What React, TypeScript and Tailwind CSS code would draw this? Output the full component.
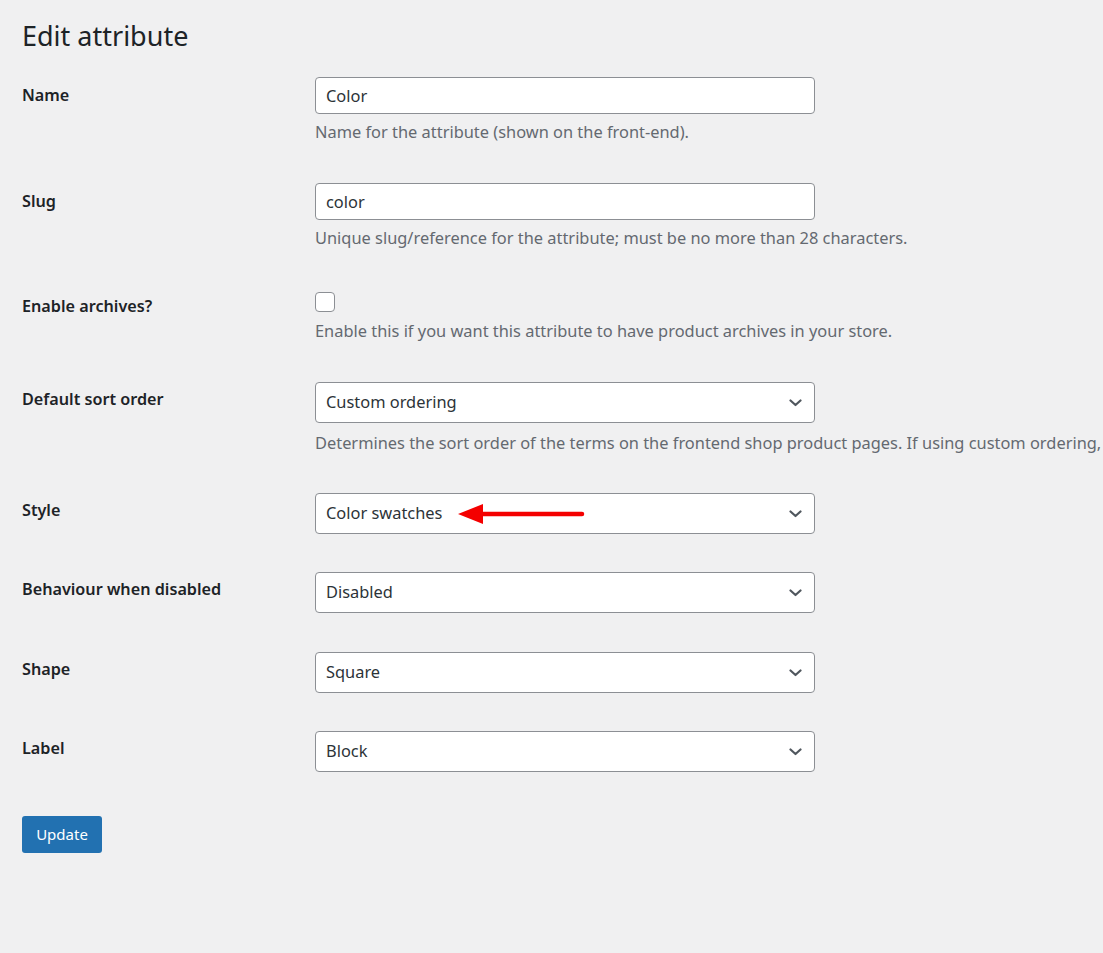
import React from "react";

const FONT = { fontFamily: '"Noto Sans", "Open Sans", sans-serif' };

function Chevron() {
  return (
    <svg width="13" height="8" viewBox="0 0 13 8" className="absolute right-[12px] top-1/2 -translate-y-1/2">
      <path d="M1.5 1.5 L6.5 6 L11.5 1.5" fill="none" stroke="#50575e" strokeWidth="2.2" strokeLinecap="round" strokeLinejoin="round" />
    </svg>
  );
}

function Select({ value, children }: { value: string; children?: React.ReactNode }) {
  return (
    <div className="relative flex h-[41px] w-[500px] items-center rounded-[4px] border border-[#8c8f94] bg-white pl-[10px] text-[16.4px] text-[#2c3338]">
      <span>{value}</span>
      {children}
      <Chevron />
    </div>
  );
}

function TextInput({ value }: { value: string }) {
  return (
    <div className="flex h-[37px] w-[500px] items-center rounded-[4px] border border-[#8c8f94] bg-white pl-[10px] pt-[1px] text-[16.4px] text-[#2c3338]">
      {value}
    </div>
  );
}

function Description({ children, className = "" }: { children: React.ReactNode; className?: string }) {
  return <p className={`whitespace-nowrap text-[16.4px] leading-[21px] text-[#646970] ${className}`}>{children}</p>;
}

function Row({
  label,
  labelPad,
  className = "",
  children,
}: {
  label: string;
  labelPad: string;
  className?: string;
  children: React.ReactNode;
}) {
  return (
    <div className={`flex ${className}`}>
      <div className={`w-[293px] shrink-0 text-[16.2px] font-semibold leading-[21px] text-[#1d2327] ${labelPad}`}>{label}</div>
      <div>{children}</div>
    </div>
  );
}

function RedArrow() {
  return (
    <svg width="130" height="24" viewBox="0 0 130 24" className="ml-[16px]">
      <polygon points="0,12 25,2 25,22" fill="#f40000" />
      <line x1="20" y1="12" x2="124" y2="12" stroke="#f40000" strokeWidth="4.5" strokeLinecap="round" />
    </svg>
  );
}

export default function App() {
  return (
    <div className="h-[953px] w-full overflow-hidden bg-[#f0f0f1] pl-[22px]" style={FONT}>
      {/* Heading */}
      <h1 className="pt-[20px] text-[27px] font-normal leading-[31px] text-[#1d2327]">Edit attribute</h1>

      {/* Name */}
      <Row label="Name" labelPad="pt-[8px]" className="mt-[26px]">
        <TextInput value="Color" />
        <Description className="mt-[7px]">Name for the attribute (shown on the front-end).</Description>
      </Row>

      {/* Slug */}
      <Row label="Slug" labelPad="pt-[8px]" className="mt-[41px]">
        <TextInput value="color" />
        <Description className="mt-[7px]">
          Unique slug/reference for the attribute; must be no more than 28 characters.
        </Description>
      </Row>

      {/* Enable archives */}
      <Row label="Enable archives?" labelPad="pt-[4px]" className="mt-[44px]">
        <div className="h-[20px] w-[20px] rounded-[4px] border border-[#8c8f94] bg-white" />
        <Description className="mt-[8px]">
          Enable this if you want this attribute to have product archives in your store.
        </Description>
      </Row>

      {/* Default sort order */}
      <Row label="Default sort order" labelPad="pt-[7px]" className="mt-[41px]">
        <Select value="Custom ordering" />
        <Description className="mt-[9px]">
          Determines the sort order of the terms on the frontend shop product pages. If using custom ordering,
        </Description>
      </Row>

      {/* Style */}
      <Row label="Style" labelPad="pt-[7px]" className="mt-[40px]">
        <Select value="Color swatches">
          <RedArrow />
        </Select>
      </Row>

      <Row label="Behaviour when disabled" labelPad="pt-[7px]" className="mt-[38px]">
        <Select value="Disabled" />
      </Row>

      <Row label="Shape" labelPad="pt-[7px]" className="mt-[39px]">
        <Select value="Square" />
      </Row>

      <Row label="Label" labelPad="pt-[7px]" className="mt-[38px]">
        <Select value="Block" />
      </Row>

      <button className="mt-[44px] flex h-[37px] w-[80px] items-center justify-center rounded-[3px] bg-[#2271b1] text-[15px] text-white">
        Update
      </button>
    </div>
  );
}
